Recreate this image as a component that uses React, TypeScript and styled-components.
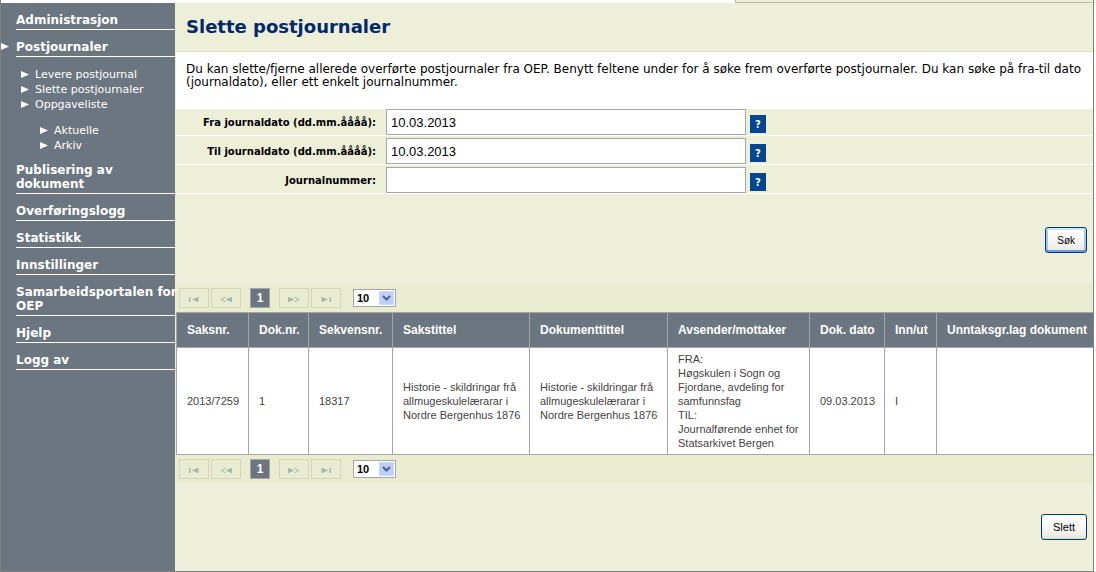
import React from "react";
import styled, { createGlobalStyle } from "styled-components";

const slate = "#6c7680";
const sand = "#edefd9";
const line = "#a6a6a6";
const verdana = `Verdana, "DejaVu Sans", sans-serif`;
const arial = `"Liberation Sans", Arial, sans-serif`;

const GlobalStyle = createGlobalStyle`
  *, *::before, *::after { box-sizing: border-box; }
  body { margin: 0; background: #fdfdf8; font-family: ${verdana}; }
  ul { list-style: none; margin: 0; padding: 0; }
`;

const Frame = styled.div`
  display: flex;
  flex-direction: column;
  min-height: 100vh;
  margin-right: 2px;
  border: 1px solid #808080;
  border-top: 0;
  background: ${sand};
`;

const TopStrip = styled.div`
  display: flex;
  height: 3px;
  background: #fff;
`;

const TabSpace = styled.div`
  flex: 0 1 734px;
`;

const TabEdge = styled.div`
  flex: 1;
  background: ${sand};
  border-left: 1px solid #bcbe9e;
  border-bottom: 1px solid #bcbe9e;
`;

const Columns = styled.div`
  display: flex;
  flex: 1;
`;

const Sidebar = styled.nav`
  flex: 0 0 174px;
  min-width: 0;
  background: ${slate};
  color: #fff;
`;

const MenuLink = styled.a`
  position: relative;
  display: block;
  margin-left: 15px;
  padding: 10px 0 2px;
  border-bottom: 1px solid #fff;
  color: #fff;
  font-size: 12px;
  font-weight: bold;
  line-height: 14px;
  text-decoration: none;
  white-space: pre;
`;

const ActiveMark = styled.svg`
  position: absolute;
  left: -15px;
  bottom: 6px;
`;

const SubMenu = styled.ul`
  padding: 10px 0 0 20px;
`;

const NestedMenu = styled.ul`
  padding: 11px 0 0 19px;
`;

const SubLink = styled.a`
  display: flex;
  align-items: center;
  gap: 6px;
  color: #fff;
  font-size: 11px;
  line-height: 15px;
  text-decoration: none;
`;

const Main = styled.main`
  flex: 1;
  min-width: 0;
  padding-left: 1px;
`;

const Title = styled.h1`
  margin: 0;
  padding: 12px 10px;
  border-bottom: 1px solid #dfe1bd;
  color: #00286b;
  font-size: 18px;
  line-height: 24px;
`;

const Intro = styled.p`
  margin: 0;
  padding: 11px 8px 20px 10px;
  background: #fff;
  color: #000;
  font-size: 12px;
  line-height: 13px;
`;

const Field = styled.div`
  display: flex;
  align-items: center;
  padding-top: 2px;
  border-bottom: 1px solid #fff;
  &:first-child { padding-top: 0; }
`;

const FieldLabel = styled.label`
  flex: 0 0 200px;
  margin-right: 10px;
  font-size: 10px;
  font-weight: bold;
  text-align: right;
`;

const TextBox = styled.input`
  width: 360px;
  height: 26px;
  padding: 0 4px;
  border: 1px solid ${line};
  border-radius: 0;
  background: #fff;
  color: #000;
  font-family: ${arial};
  font-size: 13px;
`;

const HelpButton = styled.button`
  width: 16px;
  height: 18px;
  margin: 4px 0 0 4px;
  padding: 0;
  border: 0;
  background: #00478f;
  color: #fff;
  font-family: ${verdana};
  font-size: 10px;
  font-weight: bold;
`;

const Actions = styled.div<{ $search?: boolean }>`
  display: flex;
  justify-content: flex-end;
  padding: ${(p) => (p.$search ? "33px 6px 31px" : "31px 6px")};
`;

const PushButton = styled.button<{ $focus?: boolean }>`
  height: 26px;
  padding: 0 11px;
  border: 1px solid #003c74;
  border-radius: 3px;
  background: linear-gradient(#fff, #f3f3ee 70%, #e6e6df);
  box-shadow: ${(p) =>
    p.$focus
      ? "inset 0 2px #cee3fc, inset 0 -2px #7896e4, inset 2px 0 #a5c2f2, inset -2px 0 #a5c2f2"
      : "inset 0 -1px #dcd9cf"};
  color: #000;
  font-family: ${arial};
  font-size: ${(p) => (p.$focus ? "10px" : "11px")};
`;

const PagerBar = styled.div`
  display: flex;
  align-items: center;
  gap: 2px;
  height: 28px;
  padding: 0 3px;
  background: #e9ecd1;
`;

const StepButton = styled.button`
  display: flex;
  align-items: center;
  justify-content: center;
  width: 30px;
  height: 20px;
  padding: 3px 0 0;
  border: 1px solid #d2d4bd;
  background: transparent;
  color: #a3b9ac;
`;

const PageButton = styled.button`
  width: 20px;
  height: 20px;
  margin: 0 7px;
  padding: 0;
  border: 1px solid ${line};
  background: ${slate};
  color: #fff;
  font-family: ${arial};
  font-size: 12px;
  font-weight: bold;
`;

const SizePicker = styled.div`
  position: relative;
  margin-left: 10px;
  height: 18px;
`;

const SizeSelect = styled.select`
  display: block;
  appearance: none;
  width: 43px;
  height: 18px;
  padding: 0 3px;
  border: 1px solid ${line};
  border-radius: 0;
  background: #fff;
  color: #000;
  font-family: ${arial};
  font-size: 11px;
  font-weight: bold;
`;

const SelectArrow = styled.svg`
  position: absolute;
  top: 2px;
  right: 2px;
  pointer-events: none;
`;

const Table = styled.table`
  width: 100%;
  table-layout: fixed;
  border-spacing: 0;
  font-family: ${arial};
  font-size: 11px;
  line-height: 14px;
  text-align: left;
`;

const Col = styled.col<{ $w?: number }>`
  width: ${(p) => (p.$w ? `${p.$w}px` : "auto")};
`;

const HeadCell = styled.th`
  height: 36px;
  padding: 0 0 0 10px;
  border: solid ${line};
  border-width: 1px 0 1px 1px;
  background: ${slate};
  color: #fff;
  font-size: 12px;
  white-space: nowrap;
`;

const Cell = styled.td`
  padding: 4px 8px 4px 10px;
  border: solid ${line};
  border-width: 0 0 1px 1px;
  background: #fff;
  color: #444;
`;

const Triangle = () => (
  <svg width="8" height="7" viewBox="0 0 8 7" aria-hidden="true">
    <path d="M0 0L8 3.5L0 7Z" fill="#fff" />
  </svg>
);

const stepShapes = {
  first: <path d="M1 1H2.5V6H1ZM10.5 0.8V6.2L4 3.5Z" fill="currentColor" />,
  previous: (
    <>
      <path d="M5.5 1.2L1 3.5L5.5 5.8" fill="none" stroke="currentColor" />
      <path d="M12 0.8V6.2L5.5 3.5Z" fill="currentColor" />
    </>
  ),
  next: (
    <>
      <path d="M0 0.8V6.2L6.5 3.5Z" fill="currentColor" />
      <path d="M6.5 1.2L11 3.5L6.5 5.8" fill="none" stroke="currentColor" />
    </>
  ),
  last: <path d="M1.5 0.8V6.2L8 3.5ZM9.5 1H11V6H9.5Z" fill="currentColor" />,
};

const Step = ({ kind, label }: { kind: keyof typeof stepShapes; label: string }) => (
  <StepButton type="button" aria-label={label}>
    <svg width="12" height="7" viewBox="0 0 12 7" aria-hidden="true">
      {stepShapes[kind]}
    </svg>
  </StepButton>
);

const Pager = () => (
  <PagerBar>
    <Step kind="first" label="Første side" />
    <Step kind="previous" label="Forrige side" />
    <PageButton type="button">1</PageButton>
    <Step kind="next" label="Neste side" />
    <Step kind="last" label="Siste side" />
    <SizePicker>
      <SizeSelect aria-label="Rader per side" defaultValue="10">
        <option>10</option>
        <option>20</option>
        <option>50</option>
      </SizeSelect>
      <SelectArrow width="15" height="14" viewBox="0 0 15 14" aria-hidden="true">
        <rect width="15" height="14" rx="1" fill="#bdd0fb" />
        <rect x="0.5" y="0.5" width="14" height="13" rx="1" fill="none" stroke="#c9d8fc" />
        <path d="M4 5L7.5 8.5L11 5" fill="none" stroke="#4d6185" strokeWidth="2" />
      </SelectArrow>
    </SizePicker>
  </PagerBar>
);

const laterMenu = [
  "Publisering av\ndokument",
  "Overføringslogg",
  "Statistikk",
  "Innstillinger",
  "Samarbeidsportalen for\nOEP",
  "Hjelp",
  "Logg av",
];

const fields = [
  { id: "fra", label: "Fra journaldato (dd.mm.åååå):", value: "10.03.2013" },
  { id: "til", label: "Til journaldato (dd.mm.åååå):", value: "10.03.2013" },
  { id: "nummer", label: "Journalnummer:", value: "" },
];

const columns: { title: string; width?: number }[] = [
  { title: "Saksnr.", width: 72 },
  { title: "Dok.nr.", width: 60 },
  { title: "Sekvensnr.", width: 84 },
  { title: "Sakstittel", width: 137 },
  { title: "Dokumenttittel", width: 138 },
  { title: "Avsender/mottaker", width: 142 },
  { title: "Dok. dato", width: 75 },
  { title: "Inn/ut", width: 52 },
  { title: "Unntaksgr.lag dokument" },
];

const SubItem = ({ children }: { children: React.ReactNode }) => (
  <li>
    <SubLink href="#">
      <Triangle />
      {children}
    </SubLink>
  </li>
);

export default function App() {
  return (
    <>
      <GlobalStyle />
      <Frame>
        <TopStrip>
          <TabSpace />
          <TabEdge />
        </TopStrip>
        <Columns>
          <Sidebar>
            <MenuLink href="#">Administrasjon</MenuLink>
            <MenuLink href="#">
              <ActiveMark width="8" height="7" viewBox="0 0 8 7" aria-hidden="true">
                <path d="M0 0L8 3.5L0 7Z" fill="#fff" />
              </ActiveMark>
              Postjournaler
            </MenuLink>
            <SubMenu>
              <SubItem>Levere postjournal</SubItem>
              <SubItem>Slette postjournaler</SubItem>
              <SubItem>Oppgaveliste</SubItem>
              <li>
                <NestedMenu>
                  <SubItem>Aktuelle</SubItem>
                  <SubItem>Arkiv</SubItem>
                </NestedMenu>
              </li>
            </SubMenu>
            {laterMenu.map((item) => (
              <MenuLink href="#" key={item}>
                {item}
              </MenuLink>
            ))}
          </Sidebar>
          <Main>
            <Title>Slette postjournaler</Title>
            <Intro>
              Du kan slette/fjerne allerede overførte postjournaler fra OEP. Benytt feltene under
              for å søke frem overførte postjournaler. Du kan søke på fra-til dato (journaldato),
              eller ett enkelt journalnummer.
            </Intro>
            <form onSubmit={(e) => e.preventDefault()}>
              {fields.map((f) => (
                <Field key={f.id}>
                  <FieldLabel htmlFor={f.id}>{f.label}</FieldLabel>
                  <TextBox id={f.id} defaultValue={f.value} />
                  <HelpButton type="button">?</HelpButton>
                </Field>
              ))}
              <Actions $search>
                <PushButton $focus>Søk</PushButton>
              </Actions>
            </form>
            <Pager />
            <Table>
              <colgroup>
                {columns.map((c) => (
                  <Col key={c.title} $w={c.width} />
                ))}
              </colgroup>
              <thead>
                <tr>
                  {columns.map((c) => (
                    <HeadCell key={c.title}>{c.title}</HeadCell>
                  ))}
                </tr>
              </thead>
              <tbody>
                <tr>
                  <Cell>2013/7259</Cell>
                  <Cell>1</Cell>
                  <Cell>18317</Cell>
                  <Cell>Historie - skildringar frå allmugeskulelærarar i Nordre Bergenhus 1876</Cell>
                  <Cell>Historie - skildringar frå allmugeskulelærarar i Nordre Bergenhus 1876</Cell>
                  <Cell>
                    FRA:
                    <br />
                    Høgskulen i Sogn og Fjordane, avdeling for samfunnsfag
                    <br />
                    TIL:
                    <br />
                    Journalførende enhet for Statsarkivet Bergen
                  </Cell>
                  <Cell>09.03.2013</Cell>
                  <Cell>I</Cell>
                  <Cell />
                </tr>
              </tbody>
            </Table>
            <Pager />
            <Actions>
              <PushButton>Slett</PushButton>
            </Actions>
          </Main>
        </Columns>
      </Frame>
    </>
  );
}
